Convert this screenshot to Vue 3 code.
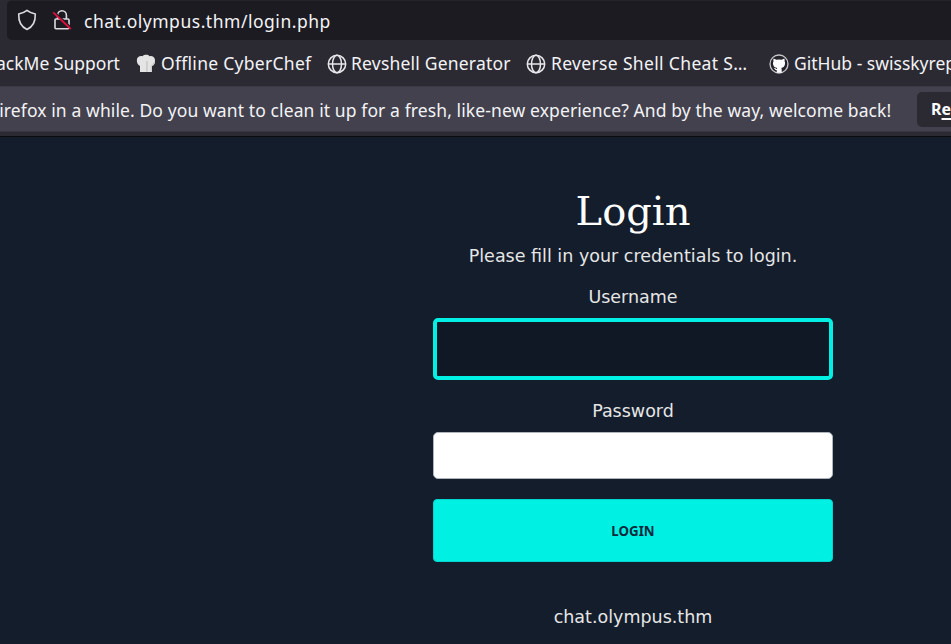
<script setup>
const bookmarks = [
  { id: 'support', icon: '', label: 'ackMe Support' },
  { id: 'chef', icon: 'chef', label: 'Offline CyberChef' },
  { id: 'revshell', icon: 'globe', label: 'Revshell Generator' },
  { id: 'cheat', icon: 'globe', label: 'Reverse Shell Cheat S…' },
  { id: 'github', icon: 'github', label: 'GitHub - swisskyrep' }
]
</script>

<template>
  <div class="window">
    <div class="toolbar">
      <div class="urlbar">
        <svg class="shield" viewBox="0 0 20 22" width="20" height="22">
          <path d="M10 1.300 C7.700 3.200 4.800 4.200 1.700 5 C1.500 11 3.300 17.500 10 20.400 C16.700 17.500 18.500 11 18.300 5 C15.200 4.200 12.300 3.200 10 1.300Z" />
        </svg>
        <svg class="lock" viewBox="0 0 20 22" width="20" height="22">
          <path class="body" d="M5.600 10V6.200a4.400 4.400 0 0 1 8.800 0V10M4 10h12q1 0 1 1v7.700q0 1-1 1H4q-1 0-1-1V11q0-1 1-1Z" />
          <path class="gap" d="M2 2.600L19.500 19" />
          <path class="slash" d="M1.200 3.400L18.800 20" />
        </svg>
        <span class="url">chat.olympus.thm/login.php</span>
      </div>
    </div>

    <nav class="bookmarks">
      <a v-for="b in bookmarks" :key="b.id" :class="['bookmark', b.id]">
        <svg v-if="b.icon === 'chef'" class="icon" viewBox="0 0 20 20" width="20" height="20">
          <path fill="#e4e4e4" d="M4 18V12C1.400 11 .6 8 .9 5.600C1.200 2.800 4 1.500 6.500 2.300C8 .5 12 .3 13.500 2.200C16 1.500 18.800 3 19 6C19.200 9 18 11.500 16 12V18Z" />
          <path fill="#cfcfcf" d="M10 18V7h2v11zM16 12C18 11.500 19.200 9 19 6L17 9L14.500 12V18H16Z" />
        </svg>
        <svg v-else-if="b.icon === 'globe'" class="icon globe" viewBox="0 0 20 20" width="20" height="20">
          <circle cx="10" cy="10" r="8.700" />
          <ellipse cx="10" cy="10" rx="4.500" ry="8.700" />
          <path d="M1.300 10H18.700" />
        </svg>
        <svg v-else-if="b.icon === 'github'" class="icon" viewBox="0 0 20 20" width="20" height="20">
          <circle cx="10" cy="10" r="9" fill="#24222a" stroke="#c8c8cc" stroke-width="1.300" />
          <path fill="#fbfbfe" d="M4.600 4.400L7.500 5.700Q10 5.200 12.500 5.700L15.400 4.400Q15.900 6 15.600 7.300Q16.300 8.500 16 10Q15.600 13.500 12.200 14Q12.800 14.700 12.700 16V18.800H7.800V16.300Q6 16.500 5.400 14.600L4.600 13.700Q6.300 13.600 7.300 15Q7.700 15 8 14.500Q8 14.200 8.200 14Q4.400 13.500 4 10Q3.800 8.500 4.500 7.300Q4.100 6 4.600 4.400Z" />
        </svg>
        <span class="label">{{ b.label }}</span>
      </a>
    </nav>

    <div class="notice">
      <span class="message">Firefox in a while. Do you want to clean it up for a fresh, like-new experience? And by the way, welcome back!</span>
      <button class="refresh">R<u>e</u>fresh Firefox…</button>
    </div>
    <div class="edge"></div>

    <main class="page">
      <form class="login" @submit.prevent>
        <h1>Login</h1>
        <p>Please fill in your credentials to login.</p>
        <label for="username">Username</label>
        <input id="username" class="active" type="text" />
        <label for="password" class="second">Password</label>
        <input id="password" type="password" />
        <button class="submit">LOGIN</button>
        <footer>chat.olympus.thm</footer>
      </form>
    </main>
  </div>
</template>

<style>
body { margin: 0; overflow: hidden; background: #141d2b; }
</style>

<style scoped>
* { box-sizing: border-box; }
.window {
  width: 951px;
  height: 644px;
  overflow: hidden;
  display: flex;
  flex-direction: column;
  color: #f3f3f6;
  background: #141d2b;
  font-family: "Noto Sans", "Open Sans", sans-serif;
  font-size: 17.5px;
  white-space: nowrap;
}
.toolbar { flex: none; height: 41px; padding-left: 7px; background: #2b2a33; }
.urlbar {
  height: 40px;
  display: flex;
  align-items: center;
  padding-left: 10px;
  border-top: 1px solid #25242c;
  border-radius: 5px 0 0 5px;
  background: #1c1b22;
}
.urlbar svg { flex: none; margin-bottom: 1px; fill: none; stroke: #dcdce0; stroke-width: 1.6; stroke-linejoin: round; }
.urlbar .lock { margin-left: 15px; }
.lock .gap { stroke: #1c1b22; stroke-width: 1.8; }
.lock .slash { stroke: #e3103f; stroke-width: 1.8; }
.url { margin: 1px 0 0 12px; letter-spacing: 0.52px; }
.bookmarks { flex: none; height: 45px; display: flex; background: #2b2a33; }
.bookmark { flex: none; display: flex; align-items: center; gap: 4px; height: 46px; }
.label { margin-bottom: 2px; }
.icon { flex: none; }
.globe { fill: none; stroke: #e8e8ec; stroke-width: 1.5; }
.support { width: 140px; margin-left: -4px; }
.chef { width: 191px; gap: 5px; letter-spacing: 0.28px; }
.revshell { width: 199px; letter-spacing: 0.2px; }
.cheat { width: 243px; gap: 5px; letter-spacing: 0.34px; }
.github { gap: 5px; }
.notice {
  flex: none;
  height: 46px;
  display: flex;
  align-items: center;
  border-top: 1px solid #3a3944;
  border-bottom: 1px solid #383741;
  background: #42414d;
}
.message { flex: none; width: 927px; margin: 1px 0 0 -10px; letter-spacing: 0.105px; }
.refresh {
  flex: none;
  height: 35px;
  padding: 0 14px;
  border: 0;
  border-radius: 5px;
  color: #fbfbfe;
  background: #2b2a33;
  font: 700 16px "Noto Sans", sans-serif;
}
.refresh u { text-decoration-thickness: 2px; text-underline-offset: 3px; }
.edge { flex: none; height: 5px; background: #2b2a33; border-bottom: 1px solid #0c0c0d; }
.page { flex: 1; display: flex; padding: 50px 0 0 433px; }
.login {
  width: 400px;
  display: flex;
  flex-direction: column;
  text-align: center;
  font-family: "DejaVu Sans", sans-serif;
  font-size: 17.5px;
  line-height: 24px;
  color: #e6e6e6;
}
h1 { margin: 0; color: #fff; font: 400 40px/48px "DejaVu Serif", serif; }
p { margin: 9px 0 17px; }
input {
  height: 47px;
  margin-top: 9px;
  padding: 0 16px;
  border: 1px solid #aeb5bd;
  border-radius: 5px;
  outline: 0;
  background: #fff;
}
input.active { height: 62px; border: 4px solid #00f1e4; background: #111825; }
.second { margin-top: 19px; }
.submit {
  height: 63px;
  margin-top: 20px;
  border: 1px solid #00d6cf;
  border-radius: 4px;
  background: #00f1e4;
  color: #102a3c;
  font: 700 13.3px "Noto Sans", sans-serif;
}
footer { margin-top: 43px; }
</style>
